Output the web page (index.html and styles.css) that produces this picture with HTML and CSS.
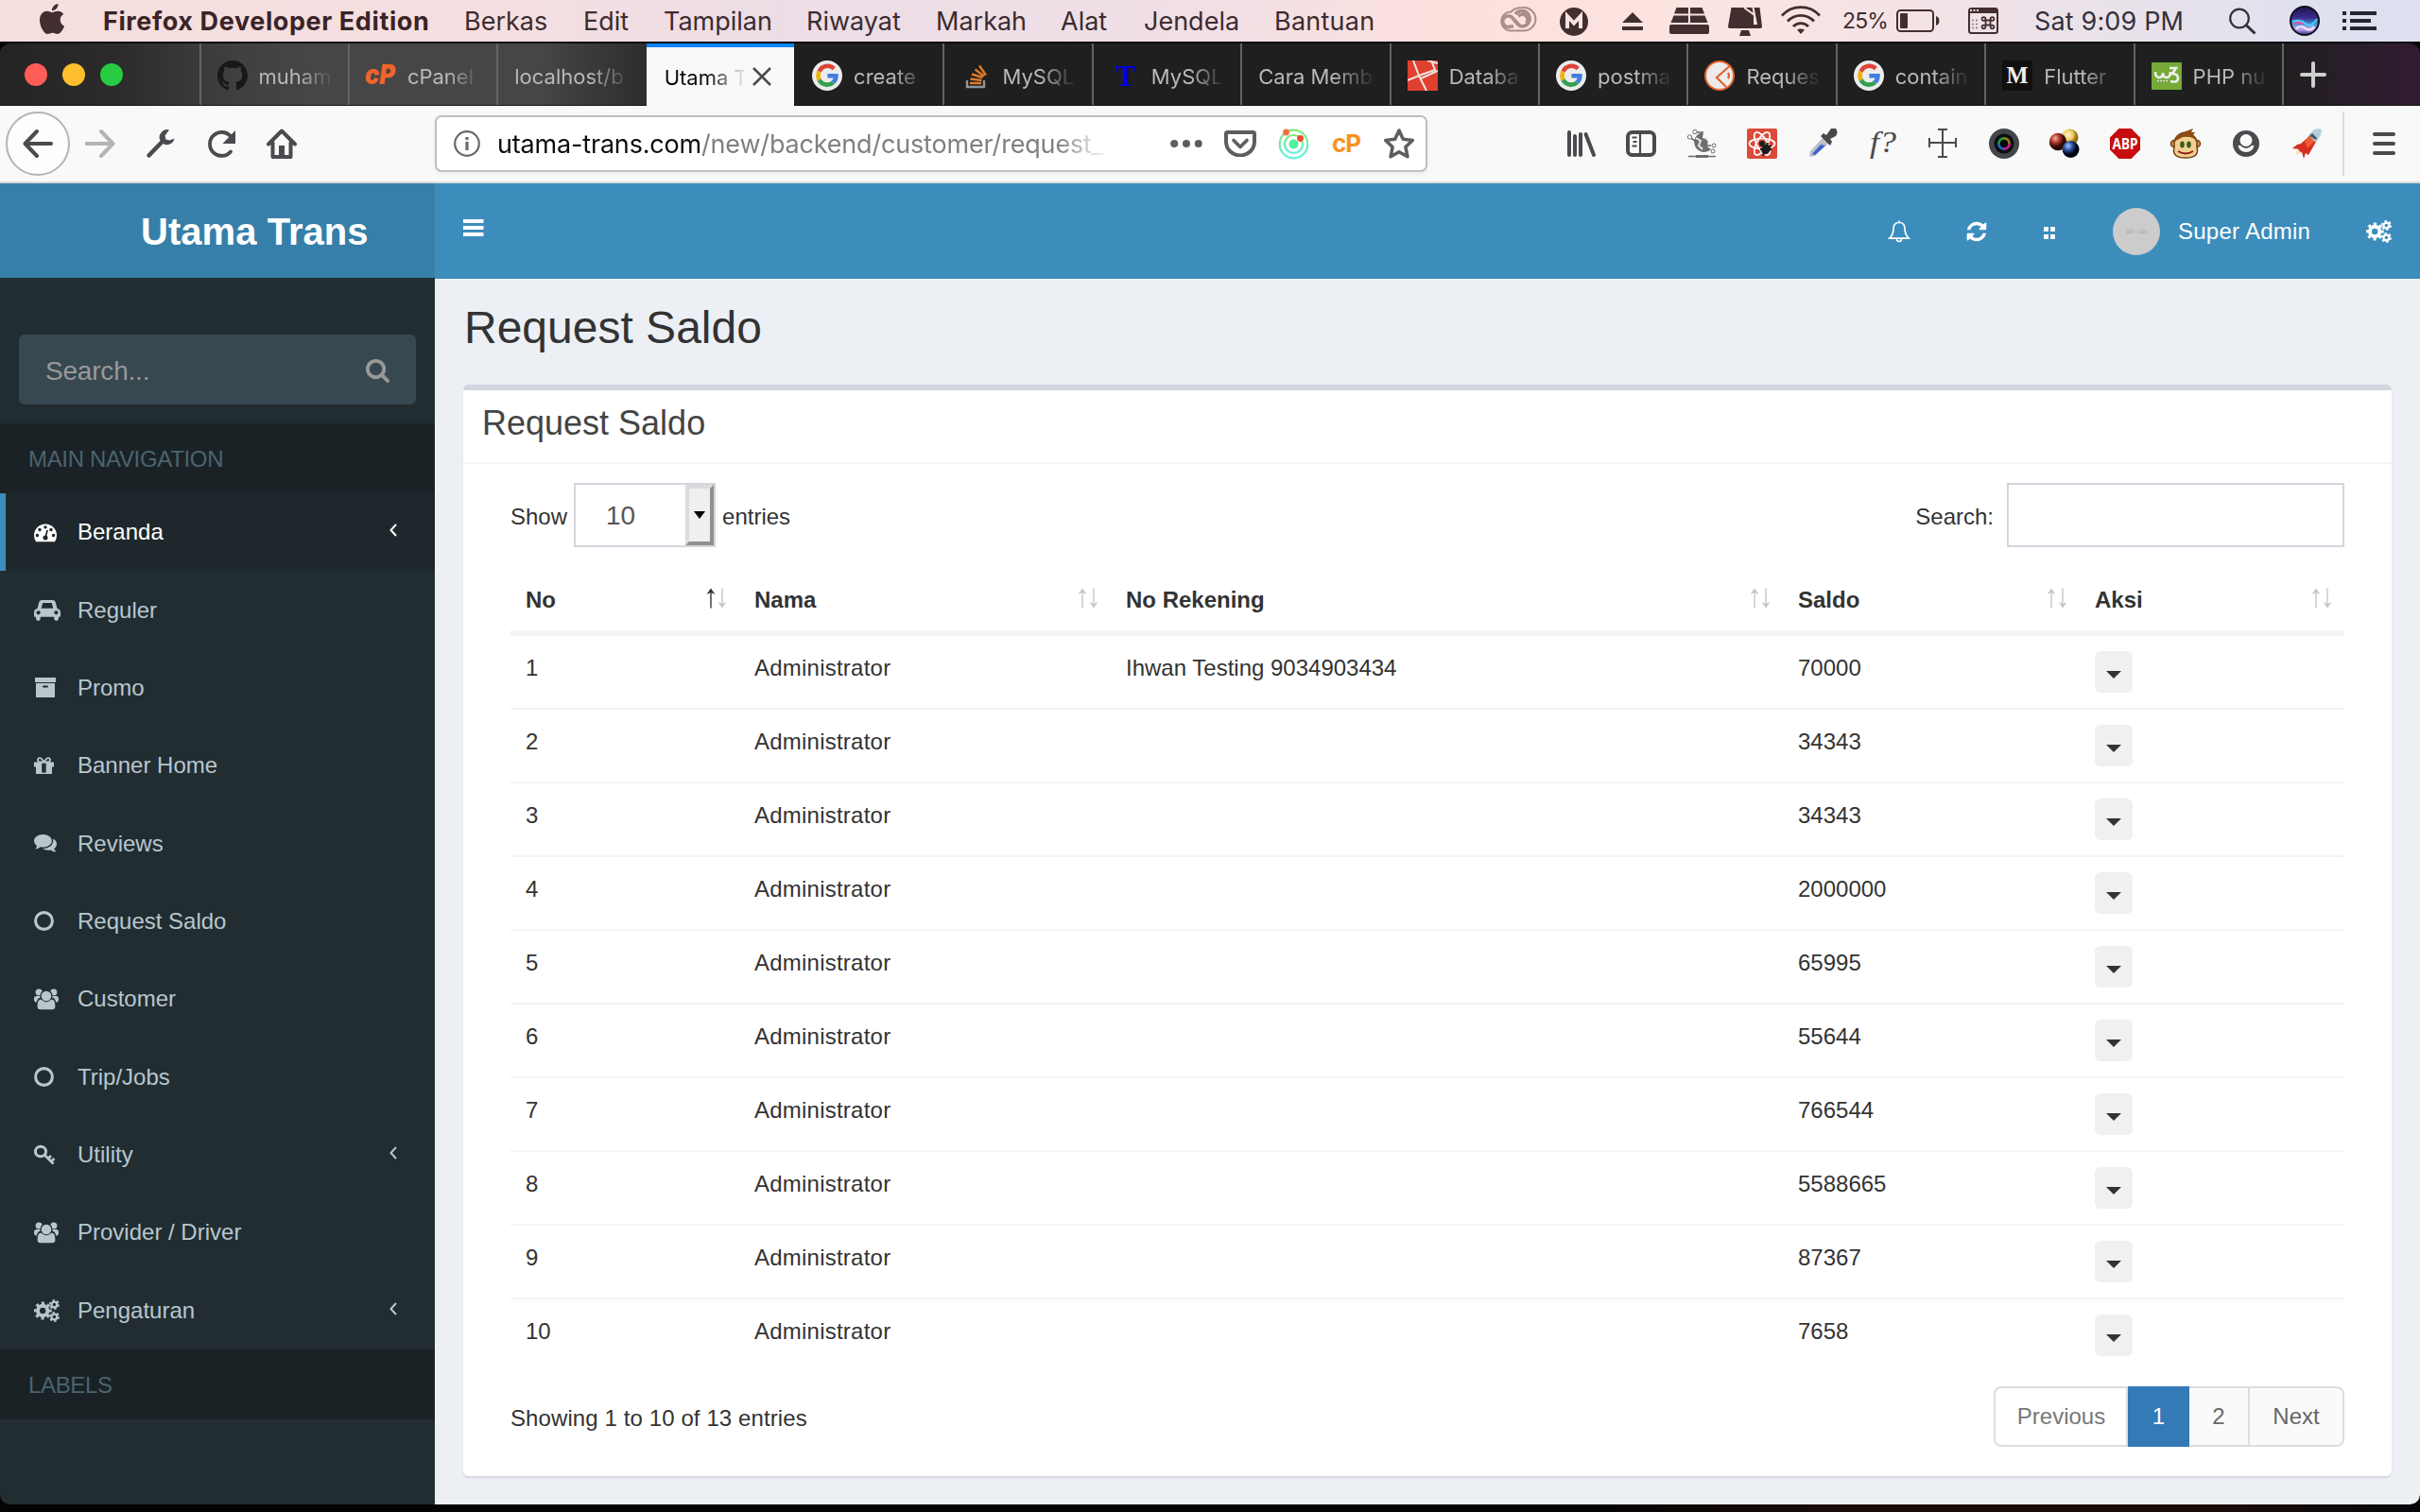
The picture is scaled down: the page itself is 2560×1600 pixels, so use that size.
FILE: index.html
```html
<!DOCTYPE html>
<html lang="id">
<head>
<meta charset="utf-8">
<title>Utama Trans</title>
<link rel="stylesheet" href="styles.css">
</head>
<body>
<svg class="defs" width="0" height="0">
  <defs>
    <symbol id="google" viewBox="0 0 32 32"><circle cx="16" cy="16" r="16" fill="#ececec"/><g fill="none" stroke-width="4.600"><path d="M23.300 8.600A9.600 9.600 0 0 0 7.600 11.600" stroke="#dc4437"/><path d="M7.600 11.600a9.800 9.800 0 0 0 0 9" stroke="#eeb211"/><path d="M7.600 20.600a9.600 9.600 0 0 0 14.800 2.600" stroke="#34a04e"/><path d="M22.400 23.200a9.600 9.600 0 0 0 3-7H16.400" stroke="#3f7de0"/></g></symbol>
    <symbol id="users" viewBox="0 0 26 24"><circle cx="5.200" cy="5" r="3.600"/><circle cx="20.800" cy="5" r="3.600"/><rect x="0" y="9" width="8.500" height="6.500" rx="2.800"/><rect x="17.500" y="9" width="8.500" height="6.500" rx="2.800"/><path d="M2.500 19c0-5 1.500-8.500 5-8.500h11c3.500 0 5 3.500 5 8.500z" fill="#222d32"/><circle cx="13" cy="9" r="6.600" fill="#222d32"/><circle cx="13" cy="9" r="5.300"/><path d="M3.600 20c0-4.600 1-7.300 3.800-7.300 1.400 0 2.500 2.500 5.600 2.500s4.200-2.500 5.600-2.500c2.800 0 3.800 2.700 3.800 7.300 0 2.200-1.200 3.300-3 3.300H6.600c-1.800 0-3-1.100-3-3.300z"/></symbol>
    <symbol id="cogs" viewBox="0 0 27 24"><g fill="none" stroke="currentColor"><circle cx="9.200" cy="12" r="5.200" stroke-width="4"/><circle cx="9.200" cy="12" r="8" stroke-width="3" stroke-dasharray="3.140 3.140" stroke-dashoffset="1.570"/><circle cx="21.400" cy="5.500" r="2.900" stroke-width="2.200"/><circle cx="21.400" cy="5.500" r="4.600" stroke-width="1.800" stroke-dasharray="2.400 2.400"/><circle cx="21.400" cy="18.500" r="2.900" stroke-width="2.200"/><circle cx="21.400" cy="18.500" r="4.600" stroke-width="1.800" stroke-dasharray="2.400 2.400"/></g></symbol>
    <symbol id="arrow-up" viewBox="0 0 10 22"><path d="M5 21.500V3" fill="none" stroke="currentColor" stroke-width="1.400"/><path d="M.5 7 5 .5 9.500 7 5 5z" fill="currentColor"/></symbol>
    <symbol id="arrow-down" viewBox="0 0 10 22"><path d="M5 .5V19" fill="none" stroke="currentColor" stroke-width="1.400"/><path d="M.5 15 5 21.500 9.500 15 5 17z" fill="currentColor"/></symbol>
    <symbol id="angle" viewBox="0 0 8 14"><path d="M7 1 1.500 7 7 13" fill="none" stroke="currentColor" stroke-width="2"/></symbol>
    <symbol id="search" viewBox="0 0 1792 1792"><path fill="currentColor" d="M1216 832q0-185-131.500-316.500t-316.500-131.500-316.500 131.500-131.500 316.500 131.500 316.500 316.500 131.500 316.500-131.500 131.500-316.500zm512 832q0 52-38 90t-90 38q-54 0-90-38l-343-342q-179 124-399 124-143 0-273.500-55.500t-225-150-150-225-55.500-273.500 55.500-273.500 150-225 225-150 273.500-55.500 273.500 55.500 225 150 150 225 55.500 273.500q0 220-124 399l343 343q37 37 37 90z"/></symbol>
    <radialGradient id="gRed" cx=".35" cy=".3"><stop offset="0" stop-color="#f7b0a4"/><stop offset=".5" stop-color="#b13a2c"/><stop offset="1" stop-color="#300804"/></radialGradient>
    <radialGradient id="gYellow" cx=".4" cy=".35"><stop offset="0" stop-color="#fff8d8"/><stop offset=".6" stop-color="#edcb5c"/><stop offset="1" stop-color="#8f7118"/></radialGradient>
    <radialGradient id="gBlue" cx=".35" cy=".3"><stop offset="0" stop-color="#a9c3f5"/><stop offset=".5" stop-color="#2f55a8"/><stop offset="1" stop-color="#020410"/></radialGradient>
    <linearGradient id="gGreen" x1="0" y1="0" x2="0" y2="1"><stop offset="0" stop-color="#7fe87e"/><stop offset="1" stop-color="#5ff0e0"/></linearGradient>
    <linearGradient id="gSiri" x1="0" y1="0" x2="0" y2="1"><stop offset="0" stop-color="#251550"/><stop offset=".4" stop-color="#3a2c8c"/><stop offset=".6" stop-color="#3f8fd8"/><stop offset=".8" stop-color="#c9a4ee"/><stop offset="1" stop-color="#2b2f80"/></linearGradient>
  </defs>
</svg>

<header class="menubar">
  <svg class="apple" viewBox="0 0 24 24"><path d="M12.152 6.896c-.948 0-2.415-1.078-3.960-1.040-2.040.027-3.910 1.183-4.961 3.014-2.117 3.675-.546 9.103 1.519 12.090 1.013 1.454 2.208 3.090 3.792 3.039 1.520-.065 2.090-.987 3.935-.987 1.831 0 2.350.987 3.960.948 1.637-.026 2.676-1.480 3.676-2.948 1.156-1.688 1.636-3.325 1.662-3.415-.039-.013-3.182-1.221-3.220-4.857-.026-3.040 2.480-4.494 2.597-4.559-1.429-2.090-3.623-2.324-4.390-2.376-2-.156-3.675 1.090-4.610 1.090zM15.530 3.830c.843-1.012 1.400-2.427 1.245-3.830-1.207.052-2.662.805-3.532 1.818-.780.896-1.454 2.338-1.273 3.714 1.338.104 2.715-.688 3.559-1.701"/></svg>
  <nav class="menus">
    <b class="m-app">Firefox Developer Edition</b><span class="m-berkas">Berkas</span><span class="m-edit">Edit</span><span class="m-tampilan">Tampilan</span><span class="m-riwayat">Riwayat</span><span class="m-markah">Markah</span><span class="m-alat">Alat</span><span class="m-jendela">Jendela</span><span class="m-bantuan">Bantuan</span>
  </nav>
  <div class="status">
    <svg width="58" height="44" viewBox="1580 0 58 44" fill="none" stroke="#a98e8c"><path d="M1598 32.500a10 10 0 1 1 .5-20C1601 9.500 1605 8 1611 8a12.300 12.300 0 1 1 0 24.500z" stroke-width="2"/><path d="M1608 27.500 1600 19a5.800 5.800 0 1 0-2 9h3M1603 15a8.300 8.300 0 1 1 8 13q-3 0-5-2l-5-5.500M1606 17q5-3.500 8.500 0t0 7" stroke-width="3.600"/></svg>
    <svg width="60" height="44" viewBox="1638 0 60 44"><circle cx="1665" cy="23" r="15"/><path d="M1658 30V17l7 7.500 7-7.500v13" fill="none" stroke="#fae3df" stroke-width="4"/></svg>
    <svg width="54" height="44" viewBox="1698 0 54 44"><path d="m1727 13 11 11h-22zM1716 28h22v4h-22z"/></svg>
    <svg width="66" height="44" viewBox="1752 0 66 44"><path d="M1773.500 8h12.500v6.500h-15zM1788 8h12.500l2.500 6.500h-15zM1770.500 16.500h15.500V24h-18.500zM1788 16.500h15.500l3 7.500H1788z"/><rect x="1766" y="26" width="42" height="10" rx="2"/></svg>
    <svg width="56" height="44" viewBox="1818 0 56 44"><path d="M1831.500 8h30l2.500 20q0 2-2 2h-32q-2 0-2-2zM1842 32h8l2 6h-12z"/><path d="m1845 8 11 8v10M1854.500 8l3.500 18" fill="none" stroke="#fae3df" stroke-width="2"/></svg>
    <svg width="62" height="44" viewBox="1874 0 62 44"><g fill="none" stroke="#432e2f" stroke-width="2.800"><path d="M1885 16.500a27 27 0 0 1 40 0M1891 22.500a19 19 0 0 1 28 0M1897 28a11 11 0 0 1 16 0"/></g><path d="m1905 36-4-4.500q4-2 8 0z"/></svg>
    <span class="battery-text">25%</span>
    <svg width="65" height="44" viewBox="2001 0 65 44"><rect x="2007" y="11" width="38" height="22" rx="3.500" fill="none" stroke="#432e2f" stroke-width="2"/><rect x="2010" y="14" width="8" height="16" rx="1"/><path d="M2048 17q3.500 1 3.500 5t-3.500 5z"/></svg>
    <svg width="67" height="44" viewBox="2066 0 67 44"><rect x="2083" y="9" width="30" height="26" rx="2.500" fill="none" stroke="#432e2f" stroke-width="2"/><path d="M2083 9h30v5h-30z"/><path d="M2084 11h10" stroke="#e8d8dc" stroke-width="1.800" stroke-dasharray="2 1.500"/><path d="M2086 21.500h7M2086 25.500h7M2086 29.500h7" stroke="#8d7778" stroke-width="1.600" stroke-dasharray="2 2"/><g fill="none" stroke="#432e2f" stroke-width="1.800"><path d="M2100.500 21.500h5v5h-5z"/><circle cx="2098.500" cy="20" r="1.900"/><circle cx="2107.500" cy="20" r="1.900"/><circle cx="2098.500" cy="28.500" r="1.900"/><circle cx="2107.500" cy="28.500" r="1.900"/></g></svg>
    <span class="clock">Sat 9:09 PM</span>
    <svg width="69" height="44" viewBox="2335 0 69 44" fill="none" stroke="#33303a"><circle cx="2369" cy="19.500" r="9.800" stroke-width="2.200"/><path d="m2376 26.500 9.500 9" stroke-width="3"/></svg>
    <svg width="62" height="44" viewBox="2404 0 62 44"><circle cx="2438" cy="22" r="15" fill="url(#gSiri)" stroke="#111020" stroke-width="2"/><path d="M2425 23q8-3 14 2t12-5" fill="none" stroke="#45d0f0" stroke-width="2"/><path d="M2426 26q5-5 11 0" fill="none" stroke="#f050b0" stroke-width="1.800"/><path d="M2429 30q5-4 10 0t9-2" fill="none" stroke="#fff" stroke-width="2.500" opacity=".7"/></svg>
    <svg width="94" height="44" viewBox="2466 0 94 44"><path fill="#272431" d="M2478 12h4v4h-4zM2478 20h4v4h-4zM2478 28h4v4h-4zM2486 12h28v4h-28zM2486 20h22v4h-22zM2486 28h28v4h-28z"/></svg>
  </div>
</header>

<div class="window">
  <div class="tabbar">
    <div class="lights"><i class="red"></i><i class="amber"></i><i class="green"></i></div>
    <div class="tab"><svg class="fav" viewBox="0 0 16 16"><path fill="#191717" d="M8 0C3.580 0 0 3.580 0 8c0 3.540 2.290 6.530 5.470 7.590.4.070.550-.170.550-.380 0-.190-.010-.820-.010-1.490-2.010.370-2.530-.490-2.690-.940-.090-.230-.480-.940-.820-1.130-.280-.150-.680-.520-.010-.530.630-.010 1.080.580 1.230.820.720 1.210 1.870.870 2.330.660.070-.520.280-.870.510-1.070-1.780-.2-3.640-.890-3.640-3.950 0-.870.310-1.590.820-2.150-.080-.2-.360-1.020.080-2.120 0 0 .670-.210 2.200.820.640-.180 1.320-.270 2-.270.680 0 1.360.090 2 .270 1.530-1.040 2.200-.820 2.200-.820.440 1.100.160 1.920.080 2.120.510.560.820 1.270.820 2.150 0 3.070-1.870 3.750-3.650 3.950.290.250.540.730.540 1.480 0 1.070-.010 1.930-.010 2.200 0 .210.150.460.550.380A8.013 8.013 0 0 0 16 8c0-4.420-3.580-8-8-8z"/></svg><span class="fade">muham</span></div>
    <div class="tab"><svg class="fav" viewBox="0 0 32 32"><text class="cp-logo" x="-1" y="25" textLength="32" lengthAdjust="spacingAndGlyphs">cP</text></svg><span class="fade">cPanel</span></div>
    <div class="tab"><span class="fade wide">localhost/b</span></div>
    <div class="tab active"><span class="fade short">Utama T</span><svg class="close" viewBox="0 0 20 20"><path d="m1 1 18 18M19 1 1 19"/></svg></div>
    <div class="tab first"><svg class="fav"><use href="#google"/></svg><span class="fade">create</span></div>
    <div class="tab"><svg class="fav" viewBox="0 0 32 32" fill="none"><path d="M7 21v7h18v-7" stroke="#8f9598" stroke-width="2.400"/><path d="M10 24h12M10.500 19.500l12 1.500M12 14.500l11.500 3.500M15.500 9.500l9.500 7M20 5.500l7 10" stroke="#e07a28" stroke-width="2.400"/></svg><span class="fade">MySQL</span></div>
    <div class="tab"><svg class="fav" viewBox="0 0 32 32"><text class="t-logo" x="6" y="27">T</text></svg><span class="fade">MySQL</span></div>
    <div class="tab"><span class="fade wide">Cara Memb</span></div>
    <div class="tab"><svg class="fav" viewBox="0 0 32 32"><rect width="32" height="32" fill="#e0402f"/><path d="m6 0 6 16 17-6-4-10M0 21l12-5 8 16M21 0l11 3M14 19l18-8" fill="none" stroke="#f4e4e0" stroke-width="2"/></svg><span class="fade">Databa</span></div>
    <div class="tab"><svg class="fav"><use href="#google"/></svg><span class="fade">postma</span></div>
    <div class="tab"><svg class="fav" viewBox="0 0 32 32"><circle cx="16" cy="16" r="15" fill="#ececec" stroke="#e7612c" stroke-width="2"/><path d="M26.500 6 13 18l10 10M25 13q2 3 0 6" fill="none" stroke="#e7612c" stroke-width="2.200"/></svg><span class="fade">Reques</span></div>
    <div class="tab"><svg class="fav"><use href="#google"/></svg><span class="fade">contain</span></div>
    <div class="tab"><svg class="fav" viewBox="0 0 32 32"><rect width="32" height="32" fill="#12100e"/><text class="m-logo" x="4.500" y="24" textLength="23" lengthAdjust="spacingAndGlyphs">M</text></svg><span class="fade">Flutter</span></div>
    <div class="tab"><svg class="fav" viewBox="0 0 32 32"><rect y="2" width="32" height="29" rx="1" fill="#76aa37"/><path d="M4 12q0 6 4 6t4-5q0 5 4 5t4-6M19 8h7l-4 6q6 0 6 5t-8 3" fill="none" stroke="#eee" stroke-width="2.600"/><path d="M6 21.500h12" stroke="#ddd" stroke-width="1.500" stroke-dasharray="2 1"/></svg><span class="fade">PHP nu</span></div>
    <div class="newtab"><svg width="28" height="28" viewBox="0 0 28 28"><path d="M14 2v24M2 14h24"/></svg></div>
  </div>

  <div class="toolbar">
    <div class="back"><svg width="32" height="32" viewBox="0 0 32 32"><path d="M30 16H3M15 3 2.500 16 15 29"/></svg></div>
    <svg class="tb fwd" viewBox="0 0 32 32"><path d="M1 16h28M17 3l12.500 13L17 29"/></svg>
    <svg class="tb wrench" viewBox="0 0 32 32"><path d="M3.500 28.500 18 13.500" stroke-width="4.500"/><path d="M25 1.500a8 8 0 1 0 5.500 9l-5 2-4-1-1-4z" fill="#4a4a4f" stroke="none"/></svg>
    <svg class="tb reload" viewBox="0 0 32 32"><path d="M26 24.500A12.500 12.500 0 1 1 26.500 9" stroke-width="3.800"/><path d="M31 2v14H17.500z" fill="#4a4a4f" stroke="none"/></svg>
    <svg class="tb home" viewBox="0 0 32 32"><path d="M2 16.500 16 2.500l14 14M6.500 15v15h19V15" /><path d="M13 30V18h6v12" fill="#4a4a4f" stroke="none"/></svg>
    <div class="urlbar">
      <svg class="info" width="28" height="28" viewBox="0 0 28 28"><circle cx="14" cy="14" r="12.800"/><path d="M14 12v9M14 7v3"/></svg>
      <span class="url"><b>utama-trans.com</b>/new/backend/customer/request_</span>
      <svg class="dots" width="34" height="8" viewBox="0 0 34 8"><circle cx="4.200" cy="4" r="4"/><circle cx="17" cy="4" r="4"/><circle cx="29.800" cy="4" r="4"/></svg>
      <svg class="pocket" width="34" height="28" viewBox="0 0 34 28" fill="none"><path d="M2 3.500Q2 2 3.500 2h27Q32 2 32 3.500V12a15 14.500 0 0 1-30 0z"/><path d="m10 10.500 7 7 7-7" stroke-width="3.600"/></svg>
      <svg class="atom" width="33" height="33" viewBox="0 0 33 33"><g fill="none" stroke="url(#gGreen)" stroke-width="2.200"><circle cx="16.500" cy="16.500" r="14.800"/><circle cx="16.500" cy="16.500" r="9.500"/></g><circle cx="16.500" cy="16.500" r="5" fill="#4ff0a0"/><circle cx="8.500" cy="4" r="3.400" fill="#f0703a"/><circle cx="23.500" cy="10.500" r="3.400" fill="#f04a2a"/></svg>
      <span class="cp">cP</span>
      <svg class="star" width="34" height="34" viewBox="0 0 34 34"><path d="m17 3 4.300 9.300 10 1.200-7.400 7 2 10.300L17 25.700l-8.900 5.100 2-10.300-7.400-7 10-1.200z"/></svg>
    </div>
    <div class="addons">
      <svg viewBox="0 0 32 32"><path d="M4 4v24M10 8v20M16 6v22M21.500 6l8.500 22" fill="none" stroke="#4a4a4f" stroke-width="4" stroke-linecap="round"/></svg>
      <svg viewBox="0 0 32 32" fill="none" stroke="#4a4a4f"><rect x="2" y="4" width="28" height="24" rx="4.500" stroke-width="4"/><path d="M15 4v24M6.500 9.500h5M7.500 14h4M6.500 18.500h5" stroke-width="2.200"/></svg>
      <svg viewBox="0 0 32 32" fill="none" stroke="#6c6c6c"><path d="M18 4a10.500 10.500 0 1 0 8 18l-4-3 1-7-6-2z" fill="#6f6f6f" stroke="none"/><path d="M10 10l5 3-2 5 4 4M20 9l3 4" stroke="#e8e8e8" stroke-width="2"/><circle cx="9" cy="3.500" r="2.200"/><circle cx="3.500" cy="9" r="2.200"/><circle cx="29" cy="18" r="2"/><circle cx="28" cy="24" r="2"/><path d="M11 4h7M5.500 10.500l4 3M26 18h-4M2 29.500h29" stroke-width="1.600"/><path d="M10 29.500h13" stroke-width="3"/></svg>
      <svg viewBox="0 0 32 32"><rect width="32" height="32" rx="2" fill="#dc4a3a"/><g fill="none" stroke="#fff" stroke-width="1.700"><ellipse cx="16" cy="16" rx="13.500" ry="5.500"/><ellipse cx="16" cy="16" rx="13.500" ry="5.500" transform="rotate(60 16 16)"/><ellipse cx="16" cy="16" rx="13.500" ry="5.500" transform="rotate(120 16 16)"/></g><ellipse cx="20" cy="22" rx="4.500" ry="5.500" transform="rotate(35 20 22)" fill="#1c1c1c"/><circle cx="16" cy="16" r="3" fill="#1c1c1c"/><path d="m14 22 12 0M22 15l-5 14M26 18l-9 7" stroke="#1c1c1c" stroke-width="1.800"/></svg>
      <svg viewBox="0 0 32 32"><path d="m2 30 1-6L17 9l6 6L8 29z" fill="#b9c0ca"/><path d="m5 27 9-10 5 1L8 28z" fill="#3c62cc"/><path d="m14 8 10 10 2-4-2-3 6-3q3-4 0-8h-5l-5 7-3-2z" fill="#484848"/></svg>
      <svg viewBox="0 0 32 32"><text class="fq" x="2" y="25" textLength="28" lengthAdjust="spacingAndGlyphs">f?</text></svg>
      <svg viewBox="0 0 32 32"><path d="M15 1v29M1 15h28M10 1h10M10 30h10M1 10v10M29 10v10" fill="none" stroke="#4a4a4f" stroke-width="2"/></svg>
      <svg viewBox="0 0 32 32"><circle cx="16" cy="16" r="16" fill="#43474d"/><circle cx="16" cy="16" r="10.500" fill="#0d0d0f"/><g fill="none" stroke-width="3"><path d="M10.500 16a5.500 5.500 0 0 1 5.500-5.500" stroke="#239a38"/><path d="M16 10.500a5.500 5.500 0 0 1 5.500 5.500" stroke="#967a18"/><path d="M21.500 16a5.500 5.500 0 0 1-5.500 5.500" stroke="#c01a90"/><path d="M16 21.500a5.500 5.500 0 0 1-5.500-5.500" stroke="#1a68b8"/></g><circle cx="16" cy="16" r="4.200" fill="#06060a"/></svg>
      <svg viewBox="0 0 32 32"><circle cx="21.500" cy="9.500" r="9" fill="url(#gYellow)"/><circle cx="9" cy="14" r="9.200" fill="url(#gRed)"/><circle cx="22.500" cy="22" r="9" fill="url(#gBlue)"/></svg>
      <svg viewBox="0 0 32 32"><path d="M9.500 0h13L32 9.500v13L22.500 32h-13L0 22.500v-13z" fill="#c70d0d"/><text class="abp" x="2.500" y="22" textLength="27" lengthAdjust="spacingAndGlyphs">ABP</text></svg>
      <svg viewBox="0 0 32 32"><g fill="#d79a58" stroke="#6f3f12" stroke-width="1.500"><circle cx="4" cy="16" r="3.500"/><circle cx="28" cy="16" r="3.500"/><path d="M4 14Q6 5 16 6q10-1 12 8v6q3 11-12 11T4 20z" fill="#f2cf93"/></g><path d="M4 15Q4 5 16 3l8-3-2 4 4 0-2 3q5 3 4 8-3-6-8-6-8-1-10 2-3 0-6 4z" fill="#8a4c12"/><ellipse cx="12.500" cy="17" rx="2.300" ry="3.500" fill="#3a5a20"/><ellipse cx="19.500" cy="17" rx="2.300" ry="3.500" fill="#3a5a20"/><path d="M8 24q8 5 16 0" fill="none" stroke="#8c1c10" stroke-width="1.800"/></svg>
      <svg viewBox="0 0 32 32"><circle cx="16" cy="16" r="14" fill="#4a4a4f"/><circle cx="16" cy="12.500" r="6.500" fill="#f9f9fa"/><path d="M7.500 18q1.500 7 8.500 7t8.500-7q-1.500-.5-3 .3-2 2.700-5.500 2.700t-5.500-2.700q-1.500-.8-3-.3z" fill="#f9f9fa"/></svg>
      <svg viewBox="0 0 32 32"><path d="m19 8 7 6-8 14-3-2-2 6-2-7-5 1 2-4-7-1 5-4 4-1z" fill="#d5301f"/><path d="m14 14 5-7 6 6-8 8z" fill="#ef5a3a"/><path d="m18 7 6-6q7-2 8 1l-1 5-5 8z" fill="#b4cfda"/><path d="m22 5 5 5-1 2-7-4z" fill="#4a585e"/><path d="m6 22 4 3-6 4z" fill="#f6e6b8"/></svg>
    </div>
    <svg class="burger" width="24" height="24" viewBox="0 0 24 24"><path d="M2 2h20M2 12h20M2 22h20"/></svg>
  </div>

  <div class="app">
    <aside class="sidebar">
      <div class="logo">Utama Trans</div>
      <div class="side-search"><span>Search...</span><svg><use href="#search"/></svg></div>
      <div class="side-head">MAIN NAVIGATION</div>
      <ul class="side-menu">
        <li class="on"><svg width="24" height="24" viewBox="0 0 1792 1792" fill="currentColor"><path d="M384 1152q0-53-37.500-90.500t-90.500-37.500-90.500 37.500-37.500 90.500 37.500 90.500 90.500 37.500 90.500-37.500 37.500-90.500zm192-448q0-53-37.500-90.500t-90.500-37.500-90.500 37.500-37.500 90.500 37.500 90.500 90.500 37.500 90.500-37.500 37.500-90.500zm428 481l101-382q6-26-7.500-48.500t-38.500-29.500-48 6.500-30 39.500l-101 382q-60 5-107 43.500t-63 98.500q-20 77 20 146t117 89 146-20 89-117q16-60-6-117t-72-91zm660-33q0-53-37.500-90.500t-90.500-37.500-90.500 37.500-37.500 90.500 37.500 90.500 90.500 37.500 90.500-37.500 37.500-90.500zm-640-640q0-53-37.500-90.500t-90.500-37.500-90.500 37.500-37.500 90.500 37.500 90.500 90.500 37.500 90.500-37.500 37.500-90.500zm448 192q0-53-37.500-90.500t-90.500-37.500-90.500 37.500-37.500 90.500 37.500 90.500 90.500 37.500 90.500-37.500 37.500-90.500zm320 448q0 261-141 483-19 29-54 29h-1402q-35 0-54-29-141-221-141-483 0-182 71-348t191-286 286-191 348-71 348 71 286 191 191 286 71 348z"/></svg><span>Beranda</span><svg class="angle"><use href="#angle"/></svg></li>
        <li><svg width="28" height="22" viewBox="0 0 28 22"><path fill="currentColor" fill-rule="evenodd" d="M8.500 0h11q2.600 0 3.300 2.400L24.500 9q3.500.8 3.500 4v4q0 .8-.8.800H26V19.500a2.300 2.300 0 0 1-4.800 0V17.800H6.800V19.500a2.300 2.300 0 0 1-4.800 0V17.800H.8Q0 17.800 0 17v-4Q0 9.800 3.500 9L5.200 2.400Q5.900 0 8.500 0zM9.300 3 7.600 8.800h12.800L18.700 3zM4.600 11.200a2.100 2.100 0 1 0 .01 0zm18.800 0a2.100 2.100 0 1 0 .01 0z"/></svg><span>Reguler</span></li>
        <li><svg width="24" height="21" viewBox="0 0 24 21"><path fill="currentColor" fill-rule="evenodd" d="M1 0h22v5H1zM2 6h20v15H2zM10 8.500a1 1 0 0 0 0 2h4a1 1 0 0 0 0-2z"/></svg><span>Promo</span></li>
        <li><svg width="21" height="18" viewBox="0 0 21 18"><path fill="currentColor" d="M0 5.500h21v5H19V18H2V10.500H0z"/><path d="M8.200 6.500h4.500v10H8.200z" fill="#222d32"/><path d="M9.800 6.500h1.400v10H9.800z" fill="#222d32"/><path d="M10.500 5.500Q8 1.200 6 1.200T4 3.200t2 2.200zM10.500 5.500Q13 1.200 15 1.200t2 2-2 2.200z" fill="none" stroke="currentColor" stroke-width="1.800"/></svg><span>Banner Home</span></li>
        <li><svg width="24" height="19" viewBox="0 0 24 19"><path fill="currentColor" d="M9.500 0c5.200 0 9.300 3 9.300 6.800s-4.100 6.800-9.300 6.800q-1.500 0-2.800-.3-2 1.700-5 2.200-.6-.2.100-.8 1.200-1.200 1.300-2.500Q0 10 0 6.800C0 3 4.200 0 9.500 0z"/><path fill="currentColor" d="M20.300 4.500q3.700 2.200 3.700 5.700 0 3-2.700 4.900.2 1.400 1.500 2.600.5.700 0 .8-3 0-5.200-2-5 1-8.600-1.500Q20.500 14.500 20.300 4.500z"/></svg><span>Reviews</span></li>
        <li><svg width="21" height="21" viewBox="0 0 21 21"><circle cx="10.500" cy="10.500" r="8.900" fill="none" stroke="currentColor" stroke-width="3.100"/></svg><span>Request Saldo</span></li>
        <li><svg width="26" height="24" fill="currentColor"><use href="#users"/></svg><span>Customer</span></li>
        <li><svg width="21" height="21" viewBox="0 0 21 21"><circle cx="10.500" cy="10.500" r="8.900" fill="none" stroke="currentColor" stroke-width="3.100"/></svg><span>Trip/Jobs</span></li>
        <li><svg width="23" height="22" viewBox="0 0 23 22" fill="none" stroke="currentColor"><ellipse cx="7" cy="7.500" rx="5.600" ry="5.200" stroke-width="3"/><path d="m10.500 10.500 10 10M15 15l3-3M18 18l3.500-3" stroke-width="2.800"/></svg><span>Utility</span><svg class="angle"><use href="#angle"/></svg></li>
        <li><svg width="26" height="24" fill="currentColor"><use href="#users"/></svg><span>Provider / Driver</span></li>
        <li><svg width="27" height="24"><use href="#cogs"/></svg><span>Pengaturan</span><svg class="angle"><use href="#angle"/></svg></li>
      </ul>
      <div class="side-head labels">LABELS</div>
    </aside>

    <main class="main">
      <div class="navbar">
        <svg class="bars" width="22" height="18" viewBox="0 0 22 18"><path d="M0 0h21.500v4H0zM0 7h21.500v4H0zM0 14h21.500v4H0z"/></svg>
        <div class="nav-right">
          <svg class="bell" width="24" height="25" viewBox="0 0 24 25"><path d="M12 1.500v2M12 3.500C7.500 3.500 6 7 6 10c0 5-1.500 7.500-4.200 10.200h20.400C19.500 17.500 18 15 18 10c0-3-1.500-6.500-6-6.500zM9.500 21a2.500 2.500 0 0 0 5 0" fill="none" stroke="#fff" stroke-width="1.700"/></svg>
          <svg class="refresh" width="24" height="24" viewBox="0 0 1792 1792"><path d="M1639 1056q0 5-1 7-64 268-268 434.500t-478 166.500q-146 0-282.500-55t-243.500-157l-129 129q-19 19-45 19t-45-19-19-45v-448q0-26 19-45t45-19h448q26 0 45 19t19 45-19 45l-137 137q71 66 161 102t187 36q134 0 250-65t186-179q11-17 53-117 8-23 30-23h192q13 0 22.500 9.500t9.500 22.500zm25-800v448q0 26-19 45t-45 19h-448q-26 0-45-19t-19-45 19-45l138-138q-148-137-349-137-134 0-250 65t-186 179q-11 17-53 117-8 23-30 23h-199q-13 0-22.500-9.500t-9.500-22.500v-7q65-268 270-434.500t480-166.500q146 0 284 55.500t245 156.500l130-129q19-19 45-19t45 19 19 45z"/></svg>
          <svg class="grid4" width="12" height="13" viewBox="0 0 12 13"><path d="M0 0h5v5H0zM7 0h5v5H7zM0 8h5v5H0zM7 8h5v5H7z"/></svg>
          <span class="avatar">320 x 320</span>
          <span class="user">Super Admin</span>
          <svg class="gear" width="27" height="24" color="#fff"><use href="#cogs"/></svg>
        </div>
      </div>

      <h1>Request Saldo</h1>

      <section class="box">
        <h3>Request Saldo</h3>
        <div class="body">
          <div class="controls">
            <label class="length">Show <span class="select"><span>10</span><i></i></span> entries</label>
            <label class="filter">Search: <input type="text" aria-label="Search"></label>
          </div>
          <table>
            <colgroup><col class="c1"><col class="c2"><col class="c3"><col class="c4"><col class="c5"></colgroup>
            <thead><tr>
              <th><div>No<span class="sort asc"><svg><use href="#arrow-up"/></svg><svg><use href="#arrow-down"/></svg></span></div></th>
              <th><div>Nama<span class="sort"><svg><use href="#arrow-up"/></svg><svg><use href="#arrow-down"/></svg></span></div></th>
              <th><div>No Rekening<span class="sort"><svg><use href="#arrow-up"/></svg><svg><use href="#arrow-down"/></svg></span></div></th>
              <th><div>Saldo<span class="sort"><svg><use href="#arrow-up"/></svg><svg><use href="#arrow-down"/></svg></span></div></th>
              <th><div>Aksi<span class="sort"><svg><use href="#arrow-up"/></svg><svg><use href="#arrow-down"/></svg></span></div></th>
            </tr></thead>
            <tbody>
              <tr><td>1</td><td>Administrator</td><td>Ihwan Testing 9034903434</td><td>70000</td><td><button></button></td></tr>
              <tr><td>2</td><td>Administrator</td><td></td><td>34343</td><td><button></button></td></tr>
              <tr><td>3</td><td>Administrator</td><td></td><td>34343</td><td><button></button></td></tr>
              <tr><td>4</td><td>Administrator</td><td></td><td>2000000</td><td><button></button></td></tr>
              <tr><td>5</td><td>Administrator</td><td></td><td>65995</td><td><button></button></td></tr>
              <tr><td>6</td><td>Administrator</td><td></td><td>55644</td><td><button></button></td></tr>
              <tr><td>7</td><td>Administrator</td><td></td><td>766544</td><td><button></button></td></tr>
              <tr><td>8</td><td>Administrator</td><td></td><td>5588665</td><td><button></button></td></tr>
              <tr><td>9</td><td>Administrator</td><td></td><td>87367</td><td><button></button></td></tr>
              <tr><td>10</td><td>Administrator</td><td></td><td>7658</td><td><button></button></td></tr>
            </tbody>
          </table>
          <div class="foot">
            <span class="showing">Showing 1 to 10 of 13 entries</span>
            <div class="pages"><a class="prev">Previous</a><a class="cur">1</a><a class="two">2</a><a class="next">Next</a></div>
          </div>
        </div>
      </section>
    </main>
  </div>
</div>
</body>
</html>
```
FILE: styles.css
```css
* { box-sizing: border-box; }
html, body { margin: 0; }
body {
  width: 2560px; height: 1600px; overflow: hidden;
  background: linear-gradient(90deg, #060303 0 1700px, #1a0c09 1950px 2350px, #06060a);
  font-family: "Liberation Sans", Arial, sans-serif;
  font-size: 24px; color: #333;
}
svg { display: block; flex: none; }
.defs { position: absolute; }

/* system menu bar */
.menubar {
  height: 44px; display: flex; align-items: flex-start; padding-left: 39px;
  background: linear-gradient(90deg, #f5dede 0, #f6dfe0 500px, #ecdde6 850px, #f0dfe6 1250px, #fde1dc 1560px, #fbe4e2 1850px, #ebe2ea 2200px, #dde1ef 2500px);
  font-family: Inter, sans-serif; font-size: 27px; line-height: 45px; color: #3c2c2f; fill: #432e2f;
}
.apple { width: 32px; height: 32px; margin-top: 4px; }
.menus { display: flex; width: 1509px; padding-left: 38px; white-space: nowrap; }
.menus > * { flex: none; }
.menus b { font-weight: 700; color: #3a2427; }
.m-app { width: 382px; letter-spacing: .6px; }
.m-berkas { width: 126px; }
.m-edit { width: 85px; }
.m-tampilan { width: 151px; }
.m-riwayat { width: 137px; }
.m-markah { width: 132px; }
.m-alat { width: 88px; }
.m-jendela { width: 138px; }
.m-bantuan { letter-spacing: .25px; }
.status { display: flex; }
.battery-text { width: 65px; padding-left: 13px; font-size: 23px; letter-spacing: -0.900px; }
.clock { width: 202px; padding-left: 19px; white-space: nowrap; color: #35303a; letter-spacing: .15px; }

/* browser chrome */
.window { height: 1548px; display: flex; flex-direction: column; border-top: 2px solid #0c090a; border-radius: 12px 12px 10px 10px; overflow: hidden; }
.tabbar {
  height: 66px; flex: none; display: flex; border-bottom: 1px solid #151515;
  background: linear-gradient(90deg, #242424 0, #2b2b2b 120px, #404040 250px, #464646 330px, #464646 570px, #2e2e2e 680px, #1f1f1f 840px, #1f1f1f 2400px, #301c30 2550px);
  font-family: Inter, sans-serif; font-size: 22px; color: #b9b9b9;
}
.lights { width: 210.500px; display: flex; gap: 16px; padding: 21px 0 0 26px; }
.lights i { width: 24px; height: 24px; border-radius: 50%; }
.red { background: #ff5d55; } .amber { background: #ffbe2e; } .green { background: #28cb42; }
.tab { width: 157.400px; flex: none; display: flex; align-items: center; border-left: 2px solid #646464; padding: 2px 0 0 17px; }
.tab.first { border-left: 0; padding-left: 19px; }
.tab.active { background: #f9f9fa; border-left: 0; border-top: 4px solid #0a84ff; color: #0c0c0d; padding: 0 0 0 19px; width: 156.400px; margin-left: 1px; height: 66px; }
.fav { width: 32px; height: 32px; margin: 0 12px 0 0; }
.fade { width: 76px; white-space: nowrap; line-height: 34px; padding-top: 2px; -webkit-mask-image: linear-gradient(90deg, #000 55%, rgba(0,0,0,.15) 95%); mask-image: linear-gradient(90deg, #000 55%, rgba(0,0,0,.15) 95%); }
.fade.wide { width: 122px; -webkit-mask-image: linear-gradient(90deg, #000 65%, rgba(0,0,0,.15) 96%); mask-image: linear-gradient(90deg, #000 65%, rgba(0,0,0,.15) 96%); }
.fade.short { width: 84px; -webkit-mask-image: linear-gradient(90deg, #000 55%, rgba(0,0,0,.15) 96%); mask-image: linear-gradient(90deg, #000 55%, rgba(0,0,0,.15) 96%); }
.close { width: 20px; height: 20px; margin-left: 9px; stroke: #4a4a4f; stroke-width: 2.500; fill: none; }
.newtab { padding: 19px 0 0 17px; border-left: 2px solid #646464; }
.newtab svg { stroke: #cfcfcf; stroke-width: 4; stroke-linecap: round; }
.cp-logo { font: italic 900 28px Inter, sans-serif; fill: #f0642c; }
.t-logo { font: bold 32px "Liberation Serif", serif; fill: #0000e0; }
.m-logo { font: bold 25px "Liberation Serif", serif; fill: #eee; }
.abp { font: bold 16px "Noto Sans", sans-serif; fill: #fff; }
.fq { font: italic 31px "Liberation Serif", serif; fill: #4a4a4f; }

.toolbar { height: 82px; flex: none; display: flex; align-items: center; background: #f9f9fa; border-bottom: 2px solid #dcdcdf; padding: 0 26px 0 6px; }
.back { width: 68px; height: 68px; border: 2px solid #b4b4b6; border-radius: 50%; background: #fdfdfd; display: flex; align-items: center; justify-content: center; }
.back svg, .tb { fill: none; stroke: #4a4a4f; stroke-width: 4; stroke-linecap: round; stroke-linejoin: round; }
.tb { width: 32px; height: 32px; }
.fwd { margin-left: 16px; stroke: #b4b4b6; }
.wrench { margin-left: 32px; }
.reload { margin-left: 32px; }
.home { margin-left: 32px; }
.urlbar { width: 1050px; height: 60px; margin-left: 146px; display: flex; align-items: center; background: #fff; border: 2px solid #bfbfc1; border-radius: 7px; box-shadow: 0 2px 6px rgba(0,0,0,.05); padding-left: 18px; }
.info { fill: none; stroke: #6a6a6c; stroke-width: 2.200; }
.info path { stroke-width: 3.200; }
.url { width: 643px; margin-left: 18px; padding-top: 1px; white-space: nowrap; font: 27px/40px Inter, sans-serif; letter-spacing: -.18px; color: #808082; -webkit-mask-image: linear-gradient(90deg, #000 92%, rgba(0,0,0,.15) 99%); mask-image: linear-gradient(90deg, #000 92%, rgba(0,0,0,.15) 99%); }
.url b { font-weight: 400; color: #0c0c0d; }
.dots { margin-left: 69px; fill: #5e5e61; }
.pocket { margin-left: 23px; stroke: #5e5e61; stroke-width: 4; stroke-linecap: round; stroke-linejoin: round; }
.atom { margin-left: 23px; }
.cp { width: 32px; margin-left: 24px; font: 700 26px/38px Inter, sans-serif; letter-spacing: -1px; color: #f7931e; }
.star { margin-left: 22px; fill: none; stroke: #5e5e61; stroke-width: 3.600; stroke-linejoin: round; }
.addons { display: flex; gap: 32px; margin-left: 146px; padding-right: 22px; border-right: 2px solid #dcdcdd; height: 68px; align-items: center; }
.addons svg { width: 32px; height: 32px; overflow: visible; }
.burger { margin-left: 30px; stroke: #4a4a4f; stroke-width: 4; stroke-linecap: round; }

/* application */
.app { flex: 1; display: flex; min-height: 0; border-radius: 0 0 10px 10px; overflow: hidden; }
.sidebar { width: 460px; flex: none; background: #222d32; color: #b8c7ce; }
.logo { height: 100px; padding-left: 149px; background: #367fa9; color: #fff; font-weight: 700; font-size: 40px; line-height: 102px; letter-spacing: .05px; white-space: nowrap; }
.side-search { margin: 60px 20px 20px; height: 74px; display: flex; align-items: center; justify-content: space-between; padding: 0 27px 0 28px; background: #374850; border-radius: 6px; color: #999; font-size: 28px; line-height: 74px; }
.side-search span { padding-top: 3px; letter-spacing: -.2px; }
.side-search svg { width: 27px; height: 27px; }
.side-head { height: 74px; padding-left: 30px; background: #1a2226; color: #4b646f; line-height: 75px; letter-spacing: -.33px; }
.labels { height: 74px; }
.side-menu { list-style: none; margin: 0; padding: 0; }
.side-menu li { height: 82.360px; display: grid; grid-template-columns: 46px 1fr 8px; align-items: center; padding: 0 40px 0 36px; line-height: 82px; }
.side-menu li.on { background: #1e282c; color: #fff; border-left: 6px solid #3c8dbc; padding-left: 30px; }
.side-menu li.on span { font-weight: 400; }
.angle { width: 8px; height: 14px; margin-bottom: 4px; }

.main { flex: 1; background: #ecf0f5; display: flex; flex-direction: column; }
.navbar { height: 101px; flex: none; background: #3c8dbc; display: flex; align-items: center; justify-content: space-between; padding: 0 30px 0 30px; color: #fff; fill: #fff; }
.bars { margin-bottom: 8px; }
.nav-right { display: flex; align-items: center; }
.refresh { margin-left: 58px; }
.grid4 { margin-left: 59px; margin-top: 4px; }
.avatar { width: 50px; height: 50px; margin-left: 61px; border-radius: 50%; background: #ccc; color: #a3a3a3; font-size: 5px; line-height: 50px; text-align: center; }
.user { width: 218px; padding-left: 19px; letter-spacing: .25px; }
h1 { margin: 0; padding: 25px 0 0 31px; height: 112px; font-size: 48px; font-weight: 400; line-height: 54px; }
.box { width: 2040px; margin-left: 30px; height: 1155px; background: #fff; border-top: 6px solid #d2d6de; border-radius: 6px; box-shadow: 0 2px 2px rgba(0,0,0,.1); }
h3 { margin: 0; height: 78px; padding-left: 20px; border-bottom: 2px solid #f4f4f4; font-size: 36px; font-weight: 400; line-height: 70px; color: #444; }
.body { padding: 20px 50px 0; }
.controls { display: flex; justify-content: space-between; height: 90px; }
.controls label { display: flex; align-items: center; height: 68px; line-height: 68px; padding-top: 3px; }
.length { gap: 7px; letter-spacing: 0; }
.select { width: 150px; height: 68px; margin-top: -3px; display: flex; border: 2px solid #d2d6de; font-size: 28px; line-height: 66px; color: #555; letter-spacing: 0; }
.select span { width: 116px; padding-left: 32px; }
.select i { width: 30px; border: 4px solid #dcdcdc; border-right-color: #909090; border-bottom-color: #909090; background: #efefef; display: flex; align-items: center; justify-content: center; }
.select i::after { content: ""; border: 6px solid transparent; border-top: 8px solid #000; border-bottom: 0; }
.filter { gap: 14px; }
.filter input { width: 357px; height: 68px; margin-top: -3px; border: 2px solid #d2d6de; background: #fff; }
table { width: 1940px; table-layout: fixed; border-collapse: separate; border-spacing: 0; line-height: 34px; }
.c1 { width: 242px; } .c2 { width: 393px; } .c3 { width: 711px; } .c4 { width: 314px; } .c5 { width: 280px; }
th { text-align: left; padding: 17px 13px 15px 16px; height: 72px; border-bottom: 6px solid #f4f4f4; }
th div { display: flex; justify-content: space-between; height: 34px; }
.sort { display: flex; gap: 2px; margin-top: 4px; color: #c6c6c6; }
.sort svg { width: 10px; height: 22px; }
.asc svg:first-child { color: #333; }
td { padding: 17px 16px 15px; height: 78px; vertical-align: top; border-top: 2px solid #f4f4f4; }
td:nth-child(2) { letter-spacing: .23px; }
td:last-child { padding: 16px; }
tbody tr:first-child td { border-top: 0; height: 76px; }
button { display: flex; align-items: center; justify-content: center; width: 40px; height: 44px; padding: 6px 0 0; border: 0; border-radius: 6px; background: #f0f0f0; }
button::after { content: ""; border: 8px solid transparent; border-top-color: #333; border-bottom: 0; }
.foot { display: flex; justify-content: space-between; padding-top: 16px; }
.showing { padding-top: 17px; line-height: 34px; letter-spacing: .1px; }
.pages { display: flex; height: 64px; line-height: 60px; color: #666; }
.pages a { border: 2px solid #ddd; background: #fafafa; text-align: center; }
.pages .prev { width: 142px; border-radius: 8px 0 0 8px; background: #fff; color: #777; padding-left: 1px; }
.pages .cur { width: 65px; border-color: #337ab7; background: #337ab7; color: #fff; }
.pages .two { width: 64px; border-left: 0; }
.pages .next { width: 100px; border-left: 0; border-radius: 0 8px 8px 0; }
```
